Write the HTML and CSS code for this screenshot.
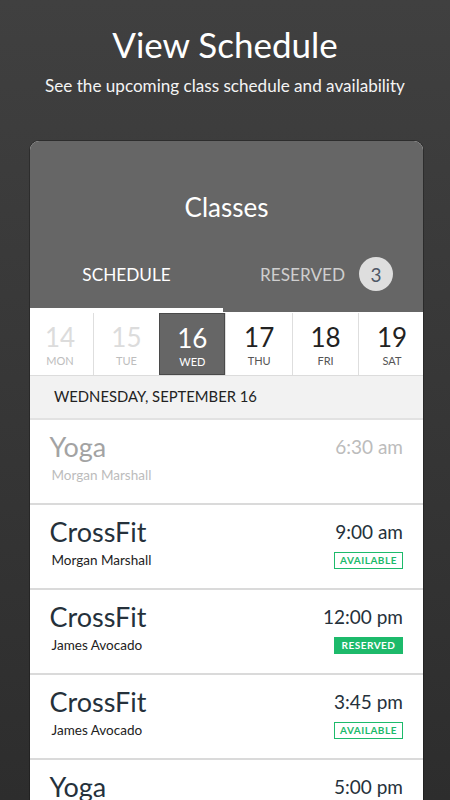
FILE: index.html
```html
<!DOCTYPE html>
<html lang="en">
<head>
<meta charset="utf-8">
<title>View Schedule</title>
<link rel="stylesheet" href="styles.css">
</head>
<body>
<header class="hero">
  <h1 class="hero-title">View Schedule</h1>
  <p class="hero-sub">See the upcoming class schedule and availability</p>
</header>
<main class="card">
  <div class="card-head">
    <h2 class="card-title">Classes</h2>
    <nav class="tabs">
      <div class="tab tab-active">SCHEDULE</div>
      <div class="tab tab-second">RESERVED <span class="count">3</span></div>
    </nav>
  </div>
  <div class="days">
    <div class="day day-past day-first"><span class="num">14</span><span class="dow">MON</span></div>
    <div class="day day-past"><span class="num">15</span><span class="dow">TUE</span></div>
    <div class="day day-sel"><span class="num">16</span><span class="dow">WED</span></div>
    <div class="day"><span class="num">17</span><span class="dow">THU</span></div>
    <div class="day"><span class="num">18</span><span class="dow">FRI</span></div>
    <div class="day"><span class="num">19</span><span class="dow">SAT</span></div>
  </div>
  <div class="date-band">WEDNESDAY, SEPTEMBER 16</div>
  <ul class="list">
    <li class="row row-past">
      <div class="info"><div class="cls">Yoga</div><div class="coach">Morgan Marshall</div></div>
      <div class="side"><div class="time">6:30 am</div></div>
    </li>
    <li class="row">
      <div class="info"><div class="cls">CrossFit</div><div class="coach">Morgan Marshall</div></div>
      <div class="side"><div class="time">9:00 am</div><span class="badge badge-open">AVAILABLE</span></div>
    </li>
    <li class="row">
      <div class="info"><div class="cls">CrossFit</div><div class="coach">James Avocado</div></div>
      <div class="side"><div class="time">12:00 pm</div><span class="badge badge-res">RESERVED</span></div>
    </li>
    <li class="row">
      <div class="info"><div class="cls">CrossFit</div><div class="coach">James Avocado</div></div>
      <div class="side"><div class="time">3:45 pm</div><span class="badge badge-open">AVAILABLE</span></div>
    </li>
    <li class="row">
      <div class="info"><div class="cls">Yoga</div><div class="coach">Morgan Marshall</div></div>
      <div class="side"><div class="time">5:00 pm</div><span class="badge badge-open">AVAILABLE</span></div>
    </li>
  </ul>
</main>
</body>
</html>
```
FILE: styles.css
```css
* { box-sizing: border-box; }
html, body { margin: 0; padding: 0; }
body {
  width: 450px;
  height: 800px;
  overflow: hidden;
  background: linear-gradient(180deg, #404040 0%, #2d2d2d 100%);
  font-family: Lato, "Open Sans", sans-serif;
}
.hero { padding-top: 22.5px; text-align: center; color: #fff; }
.hero-title { margin: 0; font-size: 35px; font-weight: 400; line-height: 42px; }
.hero-sub { margin: 11.9px 0 0; font-size: 17.1px; line-height: 20px; color: #f4f4f4; }

.card {
  margin: 44.2px 0 0 30px;
  width: 393px;
  background: #fff;
  border-radius: 9px 9px 0 0;
  overflow: hidden;
  box-shadow: 0 0 0 1px rgba(0,0,0,0.25);
}
.card-head { background: #666; padding-top: 50px; }
.card-title { margin: 0; text-align: center; color: #fff; font-size: 26px; font-weight: 400; line-height: 32px; }
.tabs { display: flex; margin-top: 29px; }
.tab {
  flex: 1;
  height: 60px;
  display: flex;
  align-items: center;
  justify-content: center;
  padding-bottom: 11px;
  border-bottom: 4px solid transparent;
  font-size: 17.2px;
  color: #cfcfcf;
}
.tab-active { color: #fff; border-bottom-color: #fff; }
.tab-second { padding-left: 7px; }
.count {
  width: 34px; height: 34px; border-radius: 50%;
  background: #dedede; color: #4f5866;
  display: inline-flex; align-items: center; justify-content: center;
  font-size: 19px; margin-left: 14px;
}

.days { display: flex; overflow: hidden; padding-top: 1px; border-bottom: 1px solid #dcdcdc; height: 64px; }
.day {
  flex: 0 0 66.4px;
  display: flex; flex-direction: column; align-items: center;
  padding-top: 9.6px;
  border-left: 1px solid #dedede;
}
.day-first { margin-left: -3.7px; }
.num { font-size: 26px; line-height: 30px; color: #222; }
.dow { font-size: 11px; line-height: 13px; margin-top: 1.6px; color: #555; }
.day-past .num { color: #dcdcdc; }
.day-past .dow { color: #bdbdbd; }
.day-sel { background: #666; border: 1px solid #4a4a4a; }
.day-sel .num, .day-sel .dow { color: #fff; }

.date-band {
  height: 44px;
  background: #f2f2f2;
  border-bottom: 2px solid #e2e2e2;
  padding: 12.5px 0 0 24px;
  font-size: 14.8px; line-height: 17px; color: #222;
}

.list { list-style: none; margin: 0; padding: 0; }
.row {
  height: 85px;
  display: flex; justify-content: space-between;
  padding: 0 20px 0 19.5px;
  border-bottom: 2px solid #dadada;
}
.info { padding-top: 11.5px; }
.cls { font-size: 27px; line-height: 32px; color: #25313b; }
.coach { margin: 4px 0 0 2px; font-size: 13.5px; line-height: 16px; color: #222; }
.side { padding-top: 15.15px; display: flex; flex-direction: column; align-items: flex-end; }
.time { font-size: 19px; line-height: 23px; color: #25313b; }
.badge {
  margin-top: 9px;
  width: 69px; height: 17px;
  border: 1px solid #1dba6b;
  text-align: center;
  font-size: 10px; line-height: 15px; font-weight: 700; letter-spacing: 0.5px;
}
.badge-open { color: #1dba6b; background: #fff; }
.badge-res { color: #fff; background: #1dba6b; }
.row-past .cls { color: #a3a3a3; }
.row-past .coach, .row-past .time { color: #bcbcbc; }
```
